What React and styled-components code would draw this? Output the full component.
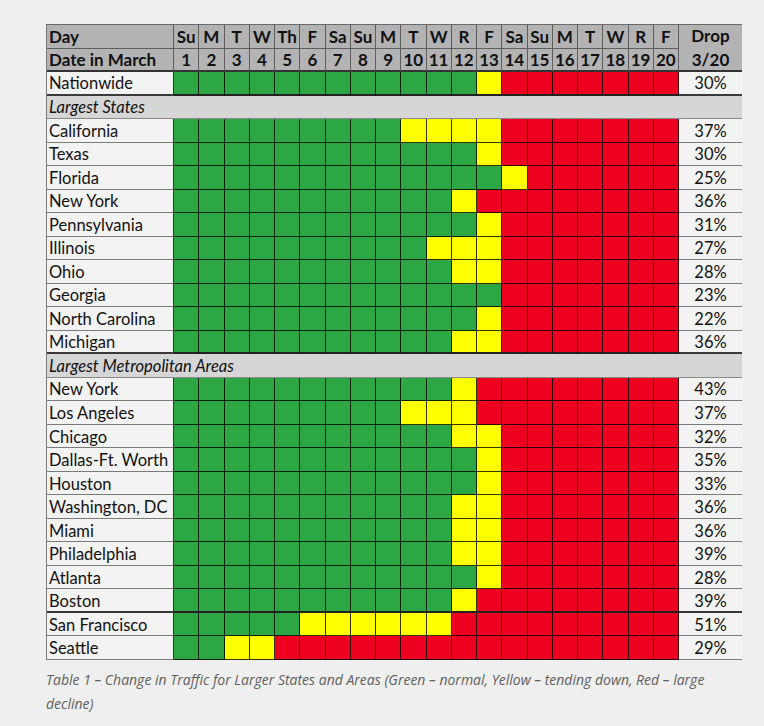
import styled, { createGlobalStyle } from "styled-components";

const GlobalStyle = createGlobalStyle`
  body {
    margin: 0;
    background: #efefef;
  }
`;

const DAYS = ["Su", "M", "T", "W", "Th", "F", "Sa", "Su", "M", "T", "W", "R", "F", "Sa", "Su", "M", "T", "W", "R", "F"];

// green days, then yellow days, the rest red
const run = (g, y) => "G".repeat(g) + "Y".repeat(y) + "R".repeat(20 - g - y);

const sections = [
  { rows: [{ name: "Nationwide", days: run(12, 1), drop: "30%", thick: true }] },
  {
    title: "Largest States",
    rows: [
      { name: "California", days: run(9, 4), drop: "37%" },
      { name: "Texas", days: run(12, 1), drop: "30%" },
      { name: "Florida", days: run(13, 1), drop: "25%" },
      { name: "New York", days: run(11, 1), drop: "36%" },
      { name: "Pennsylvania", days: run(12, 1), drop: "31%" },
      { name: "Illinois", days: run(10, 3), drop: "27%" },
      { name: "Ohio", days: run(11, 2), drop: "28%" },
      { name: "Georgia", days: run(13, 0), drop: "23%" },
      { name: "North Carolina", days: run(12, 1), drop: "22%" },
      { name: "Michigan", days: run(11, 2), drop: "36%", thick: true },
    ],
  },
  {
    title: "Largest Metropolitan Areas",
    rows: [
      { name: "New York", days: run(11, 1), drop: "43%" },
      { name: "Los Angeles", days: run(9, 3), drop: "37%" },
      { name: "Chicago", days: run(11, 2), drop: "32%" },
      { name: "Dallas-Ft. Worth", days: run(12, 1), drop: "35%" },
      { name: "Houston", days: run(12, 1), drop: "33%" },
      { name: "Washington, DC", days: run(11, 2), drop: "36%" },
      { name: "Miami", days: run(11, 2), drop: "36%" },
      { name: "Philadelphia", days: run(11, 2), drop: "39%" },
      { name: "Atlanta", days: run(12, 1), drop: "28%" },
      { name: "Boston", days: run(11, 1), drop: "39%", thick: true },
      { name: "San Francisco", days: run(5, 6), drop: "51%" },
      { name: "Seattle", days: run(2, 2), drop: "29%" },
    ],
  },
];

const COLORS = { G: "#2ca743", Y: "#ffff00", R: "#ee0020" };

const App = () => {
  return (
    <Page>
      <GlobalStyle />
      <Grid>
        <HeadCell $left>Day</HeadCell>
        {DAYS.map((d, i) => (
          <HeadCell key={"d" + i}>{d}</HeadCell>
        ))}
        <DropHead>
          <span>Drop</span>
          <span>3/20</span>
        </DropHead>
        <HeadCell $left $thick>Date in March</HeadCell>
        {DAYS.map((_, i) => (
          <HeadCell key={"n" + i} $thick>
            {i + 1}
          </HeadCell>
        ))}

        {sections.map((s, si) => (
          <Section key={si} section={s} />
        ))}
      </Grid>
      <Caption>
        Table 1 – Change in Traffic for Larger States and Areas (Green – normal, Yellow – tending down, Red – large decline)
      </Caption>
    </Page>
  );
};

const Section = ({ section }) => (
  <>
    {section.title && <SectionRow>{section.title}</SectionRow>}
    {section.rows.map((r) => (
      <Row key={r.name + r.drop} row={r} />
    ))}
  </>
);

const Row = ({ row }) => (
  <>
    <Label $thick={row.thick}>{row.name}</Label>
    {row.days.split("").map((c, i) => (
      <Day key={i} $color={COLORS[c]} $thick={row.thick} />
    ))}
    <Drop $thick={row.thick}>{row.drop}</Drop>
  </>
);

export default App;

const Page = styled.div`
  padding: 24px 0 0 46px;
  width: 696px;
`;

const Grid = styled.div`
  display: grid;
  grid-template-columns: 127px repeat(20, 1fr) 63px;
  grid-auto-rows: 23.52px;
  border-top: 1px solid #6a6a6a;
  border-left: 1px solid #7a7a7a;
  font-family: Lato, "Open Sans", sans-serif;
  font-size: 16.5px;
  color: #111;
`;

const HeadCell = styled.div`
  box-sizing: border-box;
  display: flex;
  align-items: center;
  justify-content: ${(p) => (p.$left ? "flex-start" : "center")};
  padding: 1px ${(p) => (p.$left ? "2px" : "0")} 0;
  background: #b3b3b3;
  font-weight: 700;
  font-size: 17px;
  white-space: nowrap;
  border-right: 1px solid #5e5e5e;
  border-bottom: ${(p) => (p.$thick ? "2px solid #333" : "1px solid #5e5e5e")};
`;

const DropHead = styled.div`
  grid-row: span 2;
  box-sizing: border-box;
  display: flex;
  flex-direction: column;
  align-items: center;
  justify-content: center;
  gap: 3px;
  background: #b3b3b3;
  font-weight: 700;
  font-size: 17px;
  border-bottom: 2px solid #333;
`;

const SectionRow = styled.div`
  grid-column: 1 / -1;
  box-sizing: border-box;
  display: flex;
  align-items: center;
  padding: 1px 2px 0;
  background: #d6d6d6;
  font-style: italic;
  border-bottom: 1px solid #8a8a8a;
`;

const Label = styled.div`
  box-sizing: border-box;
  display: flex;
  align-items: center;
  padding: 1px 2px 0;
  background: #f3f3f3;
  white-space: nowrap;
  border-right: 1px solid #333;
  border-bottom: ${(p) => (p.$thick ? "2px solid #3a3a3a" : "1px solid #7a7a7a")};
`;

const Day = styled.div`
  box-sizing: border-box;
  background: ${(p) => p.$color};
  border-right: 1px solid rgba(0, 0, 0, 0.8);
  border-bottom: ${(p) => (p.$thick ? "2px solid #222" : "1px solid rgba(0, 0, 0, 0.8)")};
`;

const Drop = styled.div`
  box-sizing: border-box;
  display: flex;
  align-items: center;
  justify-content: center;
  padding-top: 1px;
  background: #f3f3f3;
  border-bottom: ${(p) => (p.$thick ? "2px solid #3a3a3a" : "1px solid #7a7a7a")};
`;

const Caption = styled.p`
  margin: 8px 0 0;
  font-family: "Open Sans", sans-serif;
  font-style: italic;
  font-size: 14px;
  line-height: 24px;
  color: #606060;
`;
